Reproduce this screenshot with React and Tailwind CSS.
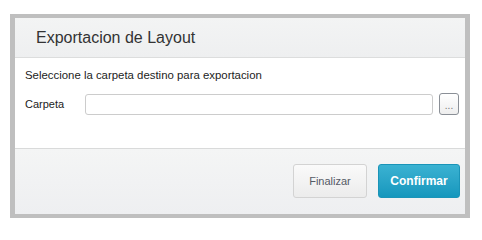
import React from 'react';

export default function App() {
  return (
    <div className="w-[482px] h-[232px] bg-white pt-[14px] pl-[10px] font-['Liberation_Sans',Arial,sans-serif]">
      <div className="w-[460px] h-[204px] border-x-[5px] border-y-[4px] border-[#bfbfbf] flex flex-col bg-white">
        {/* header */}
        <div className="h-[40px] border-b border-[#dcdddd] bg-gradient-to-b from-[#f3f4f4] to-[#eeeff0] flex items-center pl-[21px]">
          <span className="text-[16px] text-[#333333] leading-none">Exportacion de Layout</span>
        </div>

        {/* body */}
        <div className="h-[90px] bg-white pl-[10px] pr-[6px] pt-[11px]">
          <p className="text-[11.4px] leading-[13px] text-[#222222]">
            Seleccione la carpeta destino para exportacion
          </p>
          <div className="flex items-center mt-[11px]">
            <label className="w-[60px] text-[11px] text-[#222222]">Carpeta</label>
            <input
              type="text"
              className="w-[348px] h-[21px] border border-[#cccccc] rounded-[3px] bg-white outline-none"
            />
            <button
              type="button"
              className="ml-[6px] w-[20px] h-[22px] border border-[#8a8f96] rounded-[3px] bg-gradient-to-b from-[#ffffff] to-[#eeeeee] text-[10px] text-[#777777] leading-none pt-[4px]"
            >
              ...
            </button>
          </div>
        </div>

        {/* footer */}
        <div className="flex-1 border-t border-[#d9dada] bg-gradient-to-b from-[#f4f5f5] to-[#eeeff1] flex justify-end items-start pt-[15px] pr-[5px] gap-[11px]">
          <button
            type="button"
            className="w-[74px] h-[34px] border border-[#d3d3d3] rounded-[3px] bg-gradient-to-b from-[#fafafa] to-[#ececec] text-[11px] text-[#555a66]"
          >
            Finalizar
          </button>
          <button
            type="button"
            className="w-[82px] h-[34px] rounded-[3px] bg-gradient-to-b from-[#3ab2d2] to-[#1497bd] text-[12px] font-bold text-white border border-[#1a94b8]"
          >
            Confirmar
          </button>
        </div>
      </div>
    </div>
  );
}
